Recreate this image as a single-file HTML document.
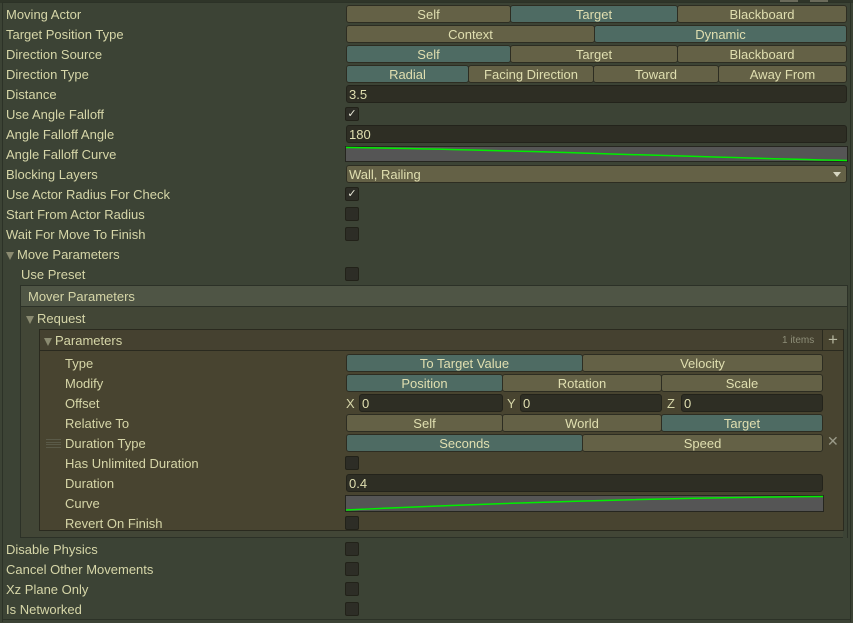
<!DOCTYPE html>
<html><head><meta charset="utf-8"><style>
*{margin:0;padding:0;box-sizing:border-box}
body{width:853px;height:623px;background:#3c4335;font-family:"Liberation Sans",sans-serif;font-size:13px;color:#d6d6a8;position:relative;overflow:hidden}
.a{position:absolute}
.lbl{position:absolute;height:20px;line-height:21px;white-space:nowrap}
.seg{position:absolute;height:18px;line-height:17px;text-align:center;background:#646146;border:1px solid #2d2d22;border-radius:3px;color:#e0dfb0}
.on{background:#4e6b63}
.fld{position:absolute;height:18px;line-height:17px;background:#2e2e24;border:1px solid #23231b;border-radius:3px;padding-left:2px;color:#e0dfb0}
.cb{position:absolute;width:14px;height:14px;background:#2d2d26;border:1px solid #222219;border-radius:2px}
.ck{color:#e8e8d8;font-size:11px;line-height:13px;text-align:center}
.tri{display:inline-block;width:0;height:0;border-left:4.5px solid transparent;border-right:4.5px solid transparent;border-top:8px solid #8a8a70;margin-right:3px;vertical-align:-1px}
</style></head><body>
<div class="a" style="left:0;top:0;width:853px;height:3px;background:#2f3529"></div>
<div class="a" style="left:2px;top:2px;width:849px;height:620px;border:1px solid #2c3227;border-bottom:none"></div>
<div class="a" style="left:780px;top:0;width:18px;height:2px;background:#6a6a5a"></div>
<div class="a" style="left:810px;top:0;width:18px;height:2px;background:#6a6a5a"></div>

<div class="lbl" style="left:6px;top:4px">Moving Actor</div>
<div class="seg" style="left:346px;top:5px;width:165px">Self</div>
<div class="seg on" style="left:510px;top:5px;width:168px">Target</div>
<div class="seg" style="left:677px;top:5px;width:170px">Blackboard</div>

<div class="lbl" style="left:6px;top:24px">Target Position Type</div>
<div class="seg" style="left:346px;top:25px;width:249px">Context</div>
<div class="seg on" style="left:594px;top:25px;width:253px">Dynamic</div>

<div class="lbl" style="left:6px;top:44px">Direction Source</div>
<div class="seg on" style="left:346px;top:45px;width:165px">Self</div>
<div class="seg" style="left:510px;top:45px;width:168px">Target</div>
<div class="seg" style="left:677px;top:45px;width:170px">Blackboard</div>

<div class="lbl" style="left:6px;top:64px">Direction Type</div>
<div class="seg on" style="left:346px;top:65px;width:123px">Radial</div>
<div class="seg" style="left:468px;top:65px;width:126px">Facing Direction</div>
<div class="seg" style="left:593px;top:65px;width:126px">Toward</div>
<div class="seg" style="left:718px;top:65px;width:129px">Away From</div>

<div class="lbl" style="left:6px;top:84px">Distance</div>
<div class="fld" style="left:346px;top:85px;width:501px">3.5</div>

<div class="lbl" style="left:6px;top:104px">Use Angle Falloff</div>
<div class="cb ck" style="left:345px;top:107px">✓</div>

<div class="lbl" style="left:6px;top:124px">Angle Falloff Angle</div>
<div class="fld" style="left:346px;top:125px;width:501px">180</div>

<div class="lbl" style="left:6px;top:144px">Angle Falloff Curve</div>
<svg class="a" style="left:345px;top:146px" width="503" height="16"><rect x="0.5" y="0.5" width="502" height="15" fill="#555555" stroke="#262620"/><path d="M1 1.5 C150 3,300 10,502 14.5" stroke="#00ee00" stroke-width="1.5" fill="none"/></svg>

<div class="lbl" style="left:6px;top:164px">Blocking Layers</div>
<div class="seg" style="left:346px;top:165px;width:501px;text-align:left;padding-left:2px">Wall, Railing<span class="a" style="right:5px;top:6px;border-left:4px solid transparent;border-right:4px solid transparent;border-top:5px solid #d6d6c0"></span></div>

<div class="lbl" style="left:6px;top:184px">Use Actor Radius For Check</div>
<div class="cb ck" style="left:345px;top:187px">✓</div>
<div class="lbl" style="left:6px;top:204px">Start From Actor Radius</div>
<div class="cb" style="left:345px;top:207px"></div>
<div class="lbl" style="left:6px;top:224px">Wait For Move To Finish</div>
<div class="cb" style="left:345px;top:227px"></div>
<div class="lbl" style="left:6px;top:244px"><span class="tri"></span>Move Parameters</div>
<div class="lbl" style="left:21px;top:264px">Use Preset</div>
<div class="cb" style="left:345px;top:267px"></div>

<div class="a" style="left:20px;top:285px;width:828px;height:253px;background:#424636;border:1px solid #2c3127"></div>
<div class="a" style="left:21px;top:286px;width:826px;height:21px;background:#4f5545;border-bottom:1px solid #2c3127"></div>
<div class="lbl" style="left:28px;top:286px">Mover Parameters</div>
<div class="lbl" style="left:26px;top:308px"><span class="tri"></span>Request</div>

<div class="a" style="left:39px;top:329px;width:805px;height:202px;background:#484430;border:1px solid #2a2a1f"></div>
<div class="a" style="left:40px;top:330px;width:782px;height:21px;background:#454130;border-bottom:1px solid #2a2a1f"></div>
<div class="a" style="left:822px;top:330px;width:21px;height:21px;border-left:1px solid #2a2a1f;border-bottom:1px solid #2a2a1f;color:#b8b8a0;font-size:17px;line-height:19px;text-align:center">+</div>
<div class="a" style="left:843px;top:329px;width:5px;height:209px;background:#3c4335"></div>
<div class="a" style="left:843px;top:329px;width:1px;height:202px;background:#2a2a1f"></div>
<div class="a" style="left:847px;top:285px;width:1px;height:253px;background:#2c3127"></div>
<div class="lbl" style="left:44px;top:330px"><span class="tri"></span>Parameters</div>
<div class="lbl" style="left:782px;top:330px;font-size:10px;color:#8e8e78">1 items</div>

<div class="lbl" style="left:65px;top:353px">Type</div>
<div class="seg on" style="left:346px;top:354px;width:237px">To Target Value</div>
<div class="seg" style="left:582px;top:354px;width:241px">Velocity</div>

<div class="lbl" style="left:65px;top:373px">Modify</div>
<div class="seg on" style="left:346px;top:374px;width:157px">Position</div>
<div class="seg" style="left:502px;top:374px;width:160px">Rotation</div>
<div class="seg" style="left:661px;top:374px;width:162px">Scale</div>

<div class="lbl" style="left:65px;top:393px">Offset</div>
<div class="lbl" style="left:346px;top:393px">X</div>
<div class="fld" style="left:359px;top:394px;width:144px">0</div>
<div class="lbl" style="left:507px;top:393px">Y</div>
<div class="fld" style="left:520px;top:394px;width:142px">0</div>
<div class="lbl" style="left:667px;top:393px">Z</div>
<div class="fld" style="left:681px;top:394px;width:142px">0</div>

<div class="lbl" style="left:65px;top:413px">Relative To</div>
<div class="seg" style="left:346px;top:414px;width:157px">Self</div>
<div class="seg" style="left:502px;top:414px;width:160px">World</div>
<div class="seg on" style="left:661px;top:414px;width:162px">Target</div>

<div class="a" style="left:46px;top:439px;width:15px;height:9px;border-top:1px solid #5a5a48;border-bottom:1px solid #5a5a48"></div>
<div class="a" style="left:46px;top:442px;width:15px;height:3px;border-top:1px solid #5a5a48;border-bottom:1px solid #5a5a48"></div>
<div class="lbl" style="left:65px;top:433px">Duration Type</div>
<div class="seg on" style="left:346px;top:434px;width:237px">Seconds</div>
<div class="seg" style="left:582px;top:434px;width:241px">Speed</div>
<div class="lbl" style="left:827px;top:431px;color:#9a9a88;font-size:14px">✕</div>

<div class="lbl" style="left:65px;top:453px">Has Unlimited Duration</div>
<div class="cb" style="left:345px;top:456px"></div>
<div class="lbl" style="left:65px;top:473px">Duration</div>
<div class="fld" style="left:346px;top:474px;width:477px">0.4</div>
<div class="lbl" style="left:65px;top:493px">Curve</div>
<svg class="a" style="left:345px;top:495px" width="479" height="17"><rect x="0.5" y="0.5" width="478" height="16" fill="#555555" stroke="#262620"/><path d="M1 15 C150 8,300 3,478 1.5" stroke="#00ee00" stroke-width="1.5" fill="none"/></svg>
<div class="lbl" style="left:65px;top:513px">Revert On Finish</div>
<div class="cb" style="left:345px;top:516px"></div>

<div class="lbl" style="left:6px;top:539px">Disable Physics</div>
<div class="cb" style="left:345px;top:542px"></div>
<div class="lbl" style="left:6px;top:559px">Cancel Other Movements</div>
<div class="cb" style="left:345px;top:562px"></div>
<div class="lbl" style="left:6px;top:579px">Xz Plane Only</div>
<div class="cb" style="left:345px;top:582px"></div>
<div class="lbl" style="left:6px;top:599px">Is Networked</div>
<div class="cb" style="left:345px;top:602px"></div>
<div class="a" style="left:2px;top:619px;width:849px;height:1px;background:#2c3227"></div>
</body></html>
